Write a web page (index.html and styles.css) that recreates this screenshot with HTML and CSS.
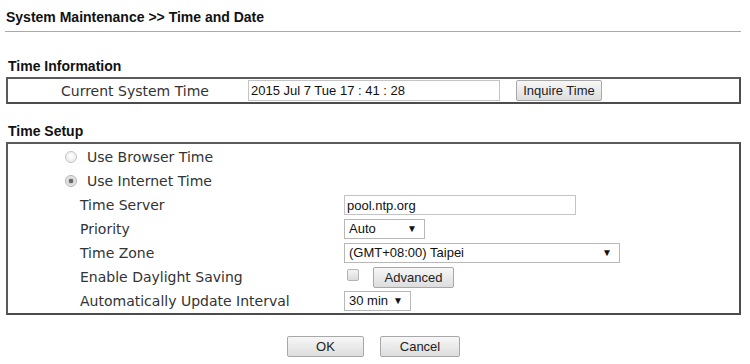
FILE: index.html
```html
<!DOCTYPE html>
<html>
<head>
    <meta charset="utf-8">
    <title>System Maintenance - Time and Date</title>
    <link rel="stylesheet" href="styles.css">
</head>
<body>
    <div class="page-title">System Maintenance &gt;&gt; Time and Date</div>

    <div class="section">
        <div class="section-title">Time Information</div>
        <div class="box info-box">
            <div class="info-label">Current System Time</div>
            <div class="info-controls">
                <input type="text" class="text-field time-field" value="2015 Jul 7 Tue 17 : 41 : 28">
                <button class="btn inquire-btn">Inquire Time</button>
            </div>
        </div>
    </div>

    <div class="section setup-section">
        <div class="section-title">Time Setup</div>
        <div class="box setup-box">
            <label class="radio-row"><input type="radio" name="mode" class="radio"> Use Browser Time</label>
            <label class="radio-row"><input type="radio" name="mode" class="radio" checked> Use Internet Time</label>

            <div class="field-row">
                <div class="field-label">Time Server</div>
                <input type="text" class="text-field server-field" value="pool.ntp.org">
            </div>
            <div class="field-row">
                <div class="field-label">Priority</div>
                <div class="select-box priority-select">Auto</div>
            </div>
            <div class="field-row">
                <div class="field-label">Time Zone</div>
                <div class="select-box zone-select">(GMT+08:00) Taipei</div>
            </div>
            <div class="field-row">
                <div class="field-label">Enable Daylight Saving</div>
                <div class="dst-controls">
                    <input type="checkbox" class="check">
                    <button class="btn advanced-btn">Advanced</button>
                </div>
            </div>
            <div class="field-row">
                <div class="field-label">Automatically Update Interval</div>
                <div class="select-box interval-select">30 min</div>
            </div>
        </div>
    </div>

    <div class="actions">
        <button class="btn action-btn ok-btn">OK</button>
        <button class="btn action-btn cancel-btn">Cancel</button>
    </div>
</body>
</html>
```

FILE: styles.css
```css
body {
    margin: 0;
    padding: 0 9px 0 6px;
    background-color: #ffffff;
    color: #222222;
    font-family: 'Liberation Sans', Arial, sans-serif;
    font-size: 13px;
}

.page-title {
    font-weight: bold;
    font-size: 14px;
    color: #111111;
    height: 31px;
    line-height: 34px;
    border-bottom: 1px solid #aaaaaa;
    margin-left: -1px;
    padding-left: 1px;
}

.section {
    margin-top: 26px;
}

.setup-section {
    margin-top: 19px;
}

.section-title {
    font-weight: bold;
    font-size: 14px;
    color: #111111;
    line-height: 16px;
    padding-left: 2px;
    margin-bottom: 3px;
}

.box {
    border: 2px solid #4c4c4c;
    border-top-color: #5a5a5a;
    border-left-color: #5a5a5a;
}

/* time information */

.info-box {
    display: flex;
    align-items: center;
    height: 23px;
}

.info-label {
    width: 226px;
    padding-left: 14px;
    text-align: center;
    font-family: 'DejaVu Sans', Verdana, sans-serif;
    font-size: 14px;
    color: #333333;
}

.info-controls {
    display: flex;
    align-items: center;
    gap: 16px;
}

.text-field {
    box-sizing: border-box;
    border: 1px solid #c4c4c4;
    padding: 0 2px;
    font-family: 'Liberation Sans', Arial, sans-serif;
    font-size: 13px;
    color: #111111;
    outline: none;
    margin: 0;
}

.time-field {
    width: 252px;
    height: 21px;
}

.btn {
    box-sizing: border-box;
    background: linear-gradient(#f7f7f7, #dddddd);
    border: 1px solid #a8a8a8;
    border-radius: 2px;
    font-family: 'Liberation Sans', Arial, sans-serif;
    font-size: 13px;
    color: #222222;
    padding: 0;
    margin: 0;
}

.inquire-btn {
    width: 86px;
    height: 21px;
}

/* time setup */

.setup-box {
    padding: 1px 0 0 0;
    height: 168px;
    box-sizing: content-box;
}

.radio-row {
    display: flex;
    align-items: center;
    height: 24px;
    padding-left: 57px;
    font-family: 'DejaVu Sans', Verdana, sans-serif;
    font-size: 14px;
    color: #333333;
}

.radio {
    appearance: none;
    width: 12px;
    height: 12px;
    margin: 0 10px 0 0;
    border: 1px solid #c2c2c2;
    border-radius: 50%;
    background: radial-gradient(circle at 50% 40%, #ffffff, #e4e4e4);
    box-sizing: border-box;
}

.radio:checked {
    background: radial-gradient(circle, #6a6a6a 0 2px, #cfcfcf 2.5px, #eeeeee 5px);
    border-color: #b0b0b0;
}

.field-row {
    display: flex;
    align-items: center;
    height: 24px;
    padding-left: 72px;
}

.field-label {
    width: 264px;
    font-family: 'DejaVu Sans', Verdana, sans-serif;
    font-size: 14px;
    color: #333333;
}

.server-field {
    width: 232px;
    height: 20px;
}

.select-box {
    position: relative;
    box-sizing: border-box;
    height: 20px;
    line-height: 18px;
    border: 1px solid #b8b8b8;
    padding-left: 4px;
    font-size: 13px;
    color: #111111;
    background-color: #ffffff;
}

.select-box::after {
    content: "\25BC";
    position: absolute;
    right: 7px;
    top: 0;
    font-size: 10px;
    color: #111111;
}

.priority-select {
    width: 81px;
}

.zone-select {
    width: 276px;
}

.interval-select {
    width: 67px;
}

.dst-controls {
    display: flex;
    align-items: center;
}

.check {
    appearance: none;
    width: 12px;
    height: 12px;
    margin: 0 0 0 3px;
    border: 1px solid #b4b4b4;
    border-radius: 2px;
    background: linear-gradient(#f4f4f4, #dcdcdc);
    box-sizing: border-box;
    position: relative;
    top: -2px;
}

.advanced-btn {
    width: 81px;
    height: 21px;
    margin-left: 14px;
}

/* bottom buttons */

.actions {
    display: flex;
    justify-content: center;
    gap: 16px;
    margin-top: 21px;
}

.action-btn {
    height: 21px;
}

.ok-btn {
    width: 77px;
}

.cancel-btn {
    width: 80px;
}
```
